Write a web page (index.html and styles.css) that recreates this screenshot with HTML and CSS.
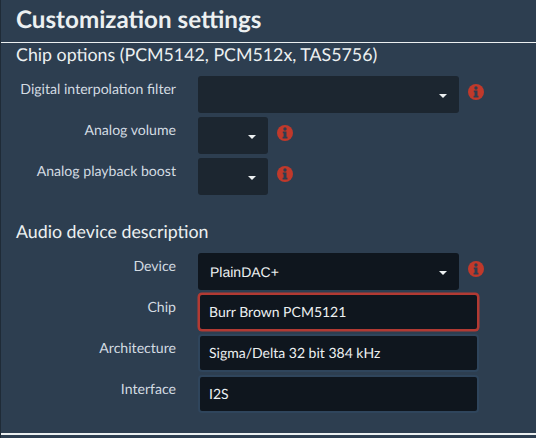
FILE: index.html
```html
<!DOCTYPE html>
<html lang="en">
<head>
<meta charset="utf-8">
<title>Customization settings</title>
<link rel="stylesheet" href="styles.css">
</head>
<body>
<svg class="defs" width="0" height="0" aria-hidden="true">
  <symbol id="info" viewBox="0 0 16 16">
    <circle cx="8" cy="8" r="8" fill="currentColor"/>
    <circle cx="8" cy="4" r="1.7" fill="#2d3e50"/>
    <path d="M5.8 6.6h3.7v5.2h1v1.6H5.6v-1.6h1V8.2h-.8z" fill="#2d3e50"/>
  </symbol>
</svg>
<main class="panel">
  <h1 class="title">Customization settings</h1>
  <section class="group">
    <h2 class="subtitle">Chip options (PCM5142, PCM512x, TAS5756)</h2>
    <div class="rows">
      <div class="row">
        <label class="label">Digital interpolation filter</label>
        <div class="control wide dim"><span class="value"></span><i class="caret"></i></div>
        <svg class="info"><use href="#info"/></svg>
      </div>
      <div class="row">
        <label class="label">Analog volume</label>
        <div class="control narrow dim"><span class="value"></span><i class="caret"></i></div>
        <svg class="info"><use href="#info"/></svg>
      </div>
      <div class="row">
        <label class="label">Analog playback boost</label>
        <div class="control narrow dim"><span class="value"></span><i class="caret"></i></div>
        <svg class="info"><use href="#info"/></svg>
      </div>
    </div>
  </section>
  <section class="group second">
    <h2 class="subtitle">Audio device description</h2>
    <div class="rows">
      <div class="row">
        <label class="label">Device</label>
        <div class="control wide dark"><span class="value arial">PlainDAC+</span><i class="caret"></i></div>
        <svg class="info"><use href="#info"/></svg>
      </div>
      <div class="row">
        <label class="label field-label">Chip</label>
        <div class="field error">Burr Brown PCM5121</div>
      </div>
      <div class="row">
        <label class="label field-label">Architecture</label>
        <div class="field">Sigma/Delta 32 bit 384 kHz</div>
      </div>
      <div class="row">
        <label class="label field-label">Interface</label>
        <div class="field">I2S</div>
      </div>
    </div>
  </section>
  <hr class="rule">
</main>
</body>
</html>
```

FILE: styles.css
```css
* { box-sizing: border-box; }
html, body { margin: 0; padding: 0; }
body {
  width: 536px;
  height: 438px;
  overflow: hidden;
  background: #1f2b37;
  font-family: Lato, sans-serif;
  color: #ecf0f1;
  text-rendering: geometricPrecision;
}
.defs { position: absolute; }
.panel {
  margin-left: 1px;
  height: 438px;
  overflow: hidden;
  background: #2d3e50;
}
.title {
  margin: 0;
  padding: 6px 0 0 15px;
  height: 43px;
  border-bottom: 1px solid #ecf0f1;
  font-size: 24.2px;
  line-height: 28px;
  font-weight: 700;
}
.subtitle {
  margin: 0;
  padding-left: 15px;
  font-size: 17.8px;
  line-height: 22px;
  font-weight: 400;
}
.rows {
  display: flex;
  flex-direction: column;
  gap: 4px;
  margin-top: 11px;
}
.second { margin-top: 25px; }
.second .rows { gap: 3px; }
.row {
  display: flex;
  align-items: flex-start;
}
.label {
  width: 175px;
  padding-top: 4px;
  text-align: right;
  font-size: 14.1px;
  line-height: 20px;
  color: #d3dbe2;
  flex: none;
  font-variant-ligatures: common-ligatures;
}
.field-label { padding-top: 5px; }
.control {
  margin-left: 22px;
  height: 37px;
  border-radius: 3px;
  display: flex;
  align-items: center;
  justify-content: space-between;
  padding: 0 12px;
  flex: none;
}
.wide { width: 261px; }
.narrow { width: 70px; }
.dim { background: #1c2630; }
.dark { background: #0f161e; }
.value { font-size: 14px; color: #ecf0f1; }
.arial { font-family: "Liberation Sans", Arial, sans-serif; }
.caret {
  width: 0;
  height: 0;
  margin-top: 2px;
  border-left: 4px solid transparent;
  border-right: 4px solid transparent;
  border-top: 4px solid #ecf0f1;
}
.info {
  width: 16px;
  height: 16px;
  margin: 8px 0 0 9px;
  color: #c0392b;
  flex: none;
}
.field {
  margin-left: 22px;
  width: 281px;
  height: 38px;
  padding: 0 9px;
  border: 2px solid #2f455c;
  border-radius: 4px;
  background: #0f161e;
  font-size: 14px;
  line-height: 34px;
  color: #ecf0f1;
  flex: none;
}
.error { border-color: #b23a33; box-shadow: 0 0 0 0.5px #b23a33; }
.rule {
  margin: 20px 0 0;
  border: 0;
  height: 2px;
  background: #ecf0f1;
}
```
